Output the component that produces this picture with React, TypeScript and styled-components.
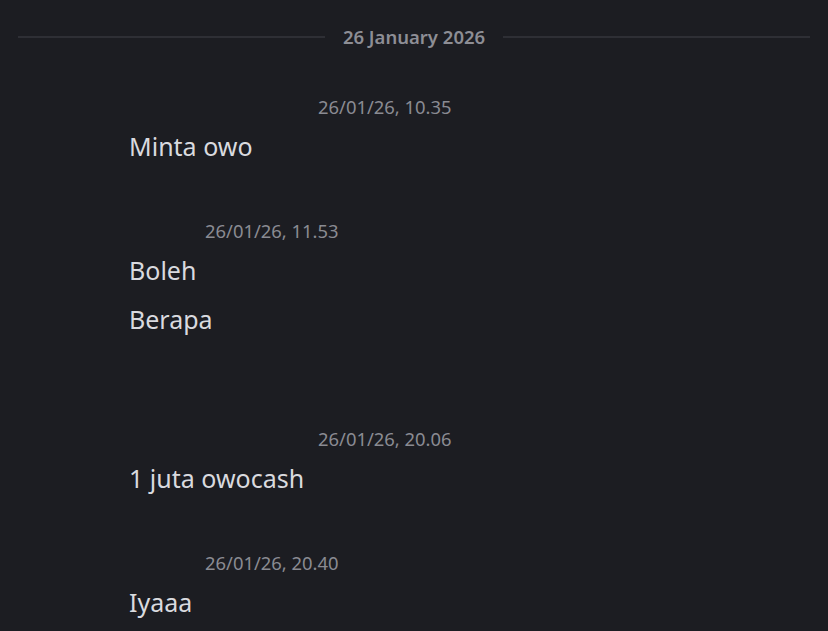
import React from 'react';
import styled, { createGlobalStyle } from 'styled-components';

const GlobalStyle = createGlobalStyle`
  html, body {
    margin: 0;
    padding: 0;
    background: #1c1d22;
  }
  body {
    font-family: "Noto Sans", "Open Sans", sans-serif;
  }
`;

type Group = {
  nameWidth: number;
  time: string;
  lines: string[];
  gapAfter: number;
};

// usernames are blanked out in the capture, only their width is kept
const groups: Group[] = [
  { nameWidth: 181, time: '26/01/26, 10.35', lines: ['Minta owo'], gapAfter: 0 },
  { nameWidth: 68, time: '26/01/26, 11.53', lines: ['Boleh', 'Berapa'], gapAfter: 35 },
  { nameWidth: 181, time: '26/01/26, 20.06', lines: ['1 juta owocash'], gapAfter: 0 },
  { nameWidth: 68, time: '26/01/26, 20.40', lines: ['Iyaaa'], gapAfter: 0 },
];

const App = () => {
  return (
    <Page>
      <GlobalStyle />
      <DateDivider>
        <Rule />
        <DateLabel>26 January 2026</DateLabel>
        <Rule />
      </DateDivider>

      <Feed>
        {groups.map((g) => (
          <MessageGroup key={g.time} $gapAfter={g.gapAfter}>
            <Header>
              <Username $width={g.nameWidth} />
              <Timestamp>{g.time}</Timestamp>
            </Header>
            <Lines>
              {g.lines.map((line) => (
                <MessageText key={line}>{line}</MessageText>
              ))}
            </Lines>
          </MessageGroup>
        ))}
      </Feed>
    </Page>
  );
};

const Page = styled.div`
  width: 828px;
  height: 631px;
  overflow: hidden;
  background: #1c1d22;
  padding-top: 27px;
  box-sizing: border-box;
`;

const DateDivider = styled.div`
  display: flex;
  align-items: center;
  gap: 18px;
  margin: 0 18px;
  height: 20px;
`;

const Rule = styled.div`
  flex: 1;
  height: 2px;
  background: #2e2f35;
`;

const DateLabel = styled.span`
  font-size: 18.5px;
  font-weight: 600;
  line-height: 20px;
  color: #8d8e95;
  white-space: nowrap;
`;

const Feed = styled.div`
  display: flex;
  flex-direction: column;
  gap: 58px;
  padding-top: 48px;
  padding-left: 129px;
`;

const MessageGroup = styled.div<{ $gapAfter: number }>`
  display: flex;
  flex-direction: column;
  gap: 12px;
  margin-bottom: ${(p) => p.$gapAfter}px;
`;

const Header = styled.div`
  display: flex;
  align-items: center;
  gap: 8px;
  height: 24px;
`;

const Username = styled.span<{ $width: number }>`
  display: inline-block;
  width: ${(p) => p.$width}px;
  height: 20px;
`;

const Timestamp = styled.span`
  font-size: 18.4px;
  line-height: 24px;
  color: #8a8b92;
`;

const Lines = styled.div`
  display: flex;
  flex-direction: column;
  gap: 19px;
`;

const MessageText = styled.div`
  font-size: 25px;
  line-height: 30px;
  color: #d9dadf;
`;

export default App;
